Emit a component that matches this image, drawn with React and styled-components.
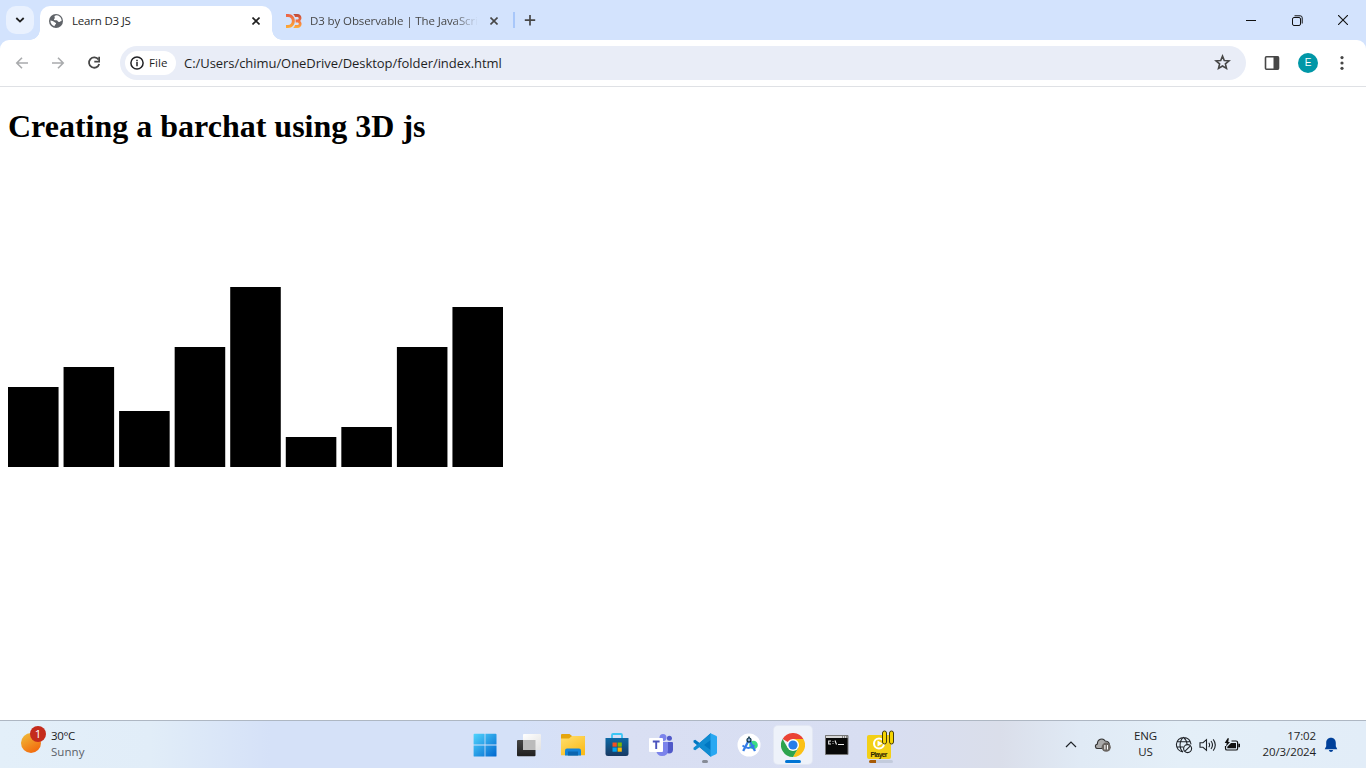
import React from "react";
import styled, { createGlobalStyle } from "styled-components";

const Global = createGlobalStyle`
  *{box-sizing:border-box}
  html,body{margin:0;padding:0;background:#fff;overflow:hidden}
  body{font-family:"Open Sans","Noto Sans",sans-serif;color:#1f1f1f}
  svg{display:block;flex:none}
`;

const Screen = styled.div`
  width:1366px;height:768px;display:flex;flex-direction:column;overflow:hidden;
`;
const TabStrip = styled.div`
  height:40px;flex:none;background:#d3e3fd;display:flex;align-items:flex-start;padding:6px 0 0 6px;
`;
const TabSearch = styled.button`
  width:28px;height:28px;padding:0;border:0;border-radius:10px;background:#e9f1fe;
  display:grid;place-items:center;margin-right:6px;
`;
const Tab = styled.div`
  position:relative;height:34px;width:${p => p.$width}px;display:flex;align-items:center;
  padding:0 9px 5px 8px;border-radius:10px 10px 0 0;font-size:11.5px;
  background:${p => (p.$active ? "#fff" : "transparent")};
  color:${p => (p.$active ? "#1f1f1f" : "#474747")};
  &::before,&::after{
    content:"";display:${p => (p.$active ? "block" : "none")};
    position:absolute;bottom:0;width:10px;height:10px;
  }
  &::before{left:-10px;background:radial-gradient(circle at 0 0,transparent 9.5px,#fff 10px)}
  &::after{right:-10px;background:radial-gradient(circle at 100% 0,transparent 9.5px,#fff 10px)}
`;
const TabTitle = styled.span`
  flex:1;min-width:0;margin:0 8px;overflow:hidden;white-space:nowrap;line-height:18px;
  letter-spacing:${p => p.$spacing || 0}px;
  ${p => p.$fade && "mask-image:linear-gradient(90deg,#000 85%,transparent 100%);"}
`;
const TabDivider = styled.i`
  width:2px;height:16px;background:#a8c7fa;margin:6px 9px 0 2px;
`;
const WindowControls = styled.div`
  margin-left:auto;display:flex;height:28px;align-items:center;
`;
const ControlButton = styled.span`
  width:46px;display:grid;place-items:center;
`;
const Toolbar = styled.div`
  height:47px;flex:none;background:#fff;border-bottom:1px solid #dfe1e5;
  border-radius:9px 9px 0 0;display:flex;align-items:center;padding:0 12px 1px 12px;
`;
const ToolbarBack = styled.div`background:#d3e3fd;flex:none;height:47px;`;
const NavButton = styled.span`
  width:20px;height:20px;display:grid;place-items:center;margin-right:16px;
`;
const Omnibox = styled.div`
  width:1126px;height:34px;border-radius:17px;background:#e9edf7;display:flex;align-items:center;
  padding:0 15px 0 5px;
`;
const FileChip = styled.span`
  width:51px;height:24px;border-radius:12px;background:#fff;display:flex;align-items:center;
  gap:4px;padding-left:4px;font-size:11.5px;font-weight:500;letter-spacing:.1px;
`;
const Url = styled.span`
  margin-left:8px;font-size:13px;letter-spacing:${p => p.$spacing}px;flex:1;white-space:nowrap;line-height:20px;
`;
const Avatar = styled.span`
  width:20px;height:20px;border-radius:50%;background:#0097a7;color:#fff;margin:0 16px;
  display:grid;place-items:center;font:10px "Liberation Sans",sans-serif;
`;
const PanelSlot = styled.span`margin-left:16px;width:20px;display:grid;place-items:center;`;

const Page = styled.main`
  flex:1;min-height:0;padding:21px 8px 0;background:#fff;
  h1{margin:0 0 22px;font:bold 32px/37px "Liberation Serif","Times New Roman",serif;color:#000;white-space:nowrap}
`;

const Taskbar = styled.footer`
  height:48px;flex:none;border-top:1px solid #aeb7c3;display:grid;grid-template-columns:463px 440px 1fr;
  background:linear-gradient(90deg,#e3eff9 0,#e1edf8 150px,#d5e1f8 270px,#d5e1f8 520px,#d9dff3 620px,#d8def2 880px,#dadeea 1000px,#e0eaf5 1080px,#e4eff8 1180px,#e2edf8 100%);
`;
const Weather = styled.div`
  display:flex;padding:4px 0 0 19px;font-size:11.5px;line-height:16px;color:#1b1b1b;
`;
const WeatherText = styled.div`
  display:flex;flex-direction:column;padding:3px 0 0 4px;
  span{letter-spacing:-.35px}
  small{font-size:11.5px;color:#5b6068;letter-spacing:.05px}
`;
const Apps = styled.nav`display:flex;`;
const AppSlot = styled.span`
  width:44px;height:47px;display:flex;justify-content:center;align-items:center;position:relative;
`;
const AppTile = styled.span`
  width:38px;height:38px;border-radius:4px;display:grid;place-items:center;
  background:${p => (p.$active ? "#eef2fa" : "transparent")};
  box-shadow:${p => (p.$active ? "0 0 0 1px #e2e7f3" : "none")};
`;
const Indicator = styled.i`
  position:absolute;bottom:5px;height:3px;border-radius:2px;
  width:${p => p.$width}px;background:${p => p.$color};
`;
const Tray = styled.div`
  display:flex;align-items:center;justify-content:flex-end;padding:0 20px 0 0;font-size:11.5px;line-height:16px;
`;
const TrayIcon = styled.span`display:grid;place-items:center;width:${p => p.$width}px;`;
const Language = styled.div`
  width:53px;text-align:center;letter-spacing:-.1px;padding-bottom:1px;
`;
const Clock = styled.div`
  width:72px;text-align:right;white-space:nowrap;letter-spacing:-.12px;padding:0 0 2px;
`;

const Cross = ({ size = 8, w = 1.6, c = "#1f1f1f" }) => (
  <svg width={size} height={size} viewBox="0 0 8 8"><path d="M.5.5l7 7M7.5.5l-7 7" stroke={c} strokeWidth={w} /></svg>
);
const Globe = () => (
  <svg width="16" height="16" viewBox="0 0 16 16">
    <circle cx="8" cy="8" r="7" fill="#5f6368" />
    <path d="M8.8 2.3c-2.2.1-2.7 1-2.1 2.1.6.8-.7 1.2-.8 2.1 0 .8 1.6.7 2.7.8 1.2.1.8 1.5 2.2 1.7 1.1.1 1.2-.9 2.8-1.1.2-2.8-2.1-5.3-4.8-5.6zM2.4 7.5c1.5.2 3 .7 4 1.6.8.7 1.7.7 1.7 1.5 0 .9-1.5.7-1.5 2.7-2.4-.7-4.3-2.8-4.2-5.8z" fill="#fff" />
  </svg>
);
const D3Logo = () => (
  <svg width="16" height="14" viewBox="0 0 16 14">
    <defs><linearGradient id="d3" x1="0" x2="0" y1="0" y2="1"><stop stopColor="#eb6048" /><stop offset="1" stopColor="#ffad35" /></linearGradient>
      <linearGradient id="d3r" x1="0" x2="0" y1="0" y2="1"><stop stopColor="#bd4838" /><stop offset=".5" stopColor="#f37243" /><stop offset="1" stopColor="#ffad35" /></linearGradient></defs>
    <path d="M0 0h2c9.2 0 9.2 14 0 14H0v-3h2c5.2 0 5.2-8 0-8H0z" fill="url(#d3)" />
    <path d="M7 0h4.2C15.7 0 16.5 5 14.2 7c2.8 2.5 1.2 7-3 7H7c1-.8 1.6-1.7 2-3h2.3c2 0 2-2.6 0-2.6H9.6V5.6h1.7c1.9 0 1.9-2.6 0-2.6H9C8.6 1.6 8 .8 7 0z" fill="url(#d3r)" />
  </svg>
);
const Arrow = ({ flip }) => (
  <svg width="14" height="12" viewBox="0 0 14 12" transform={flip ? "scale(-1 1)" : undefined}>
    <path d="M13 6H2M7 .8L1.8 6 7 11.2" fill="none" stroke="#a9abad" strokeWidth="1.6" />
  </svg>
);
const Reload = () => (
  <svg width="14" height="14" viewBox="0 0 14 14">
    <path d="M11.5 3.6A5.2 5.2 0 1 0 12.2 8" fill="none" stroke="#474747" strokeWidth="1.8" />
    <path d="M13 .8v5.7H7.3v-1.7h4V.8z" fill="#474747" />
  </svg>
);
const Info = () => (
  <svg width="16" height="16" viewBox="0 0 16 16"><circle cx="8" cy="8" r="6.1" fill="none" stroke="#202124" strokeWidth="1.5" /><path d="M8 7v4.3M8 4.7v1.5" stroke="#202124" strokeWidth="1.5" /></svg>
);
const Star = () => (
  <svg width="17" height="17" viewBox="0 0 24 24"><path d="M12 3l2.5 6.1 6.6.5-5 4.3 1.5 6.4L12 16.9l-5.6 3.4 1.5-6.4-5-4.3 6.6-.5z" fill="none" stroke="#474747" strokeWidth="2.3" /></svg>
);
const SidePanel = () => (
  <svg width="16" height="16" viewBox="0 0 16 16"><rect x="1.5" y="1.8" width="13" height="12.4" rx="1" fill="none" stroke="#474747" strokeWidth="1.6" /><path d="M9.5 1.5h5v13h-5z" fill="#474747" /></svg>
);
const Dots = () => (
  <svg width="16" height="16" viewBox="0 0 16 16" fill="#474747"><circle cx="8" cy="2.6" r="1.6" /><circle cx="8" cy="8" r="1.6" /><circle cx="8" cy="13.3" r="1.6" /></svg>
);

const bars = [80, 100, 56, 120, 180, 30, 40, 120, 160];
const BarChart = () => (
  <svg width="500" height="300">
    {bars.map((h, i) => <rect key={i} x={(i * 500) / 9} y={300 - h} width={500 / 9 - 5} height={h} />)}
  </svg>
);

const WeatherIcon = () => (
  <svg width="28" height="32" viewBox="0 0 28 32">
    <defs><linearGradient id="sun" x1=".1" y1="0" x2=".7" y2="1"><stop stopColor="#f0bd3a" /><stop offset="1" stopColor="#f2680c" /></linearGradient></defs>
    <circle cx="12" cy="18" r="10" fill="url(#sun)" />
    <circle cx="19" cy="9" r="8" fill="#c42b1c" />
    <text x="19" y="13" textAnchor="middle" fontFamily="Open Sans, sans-serif" fontSize="11.5" fill="#fff">1</text>
  </svg>
);
const StartIcon = () => (
  <svg width="24" height="24" viewBox="0 0 24 24">
    <defs><linearGradient id="win" x1="0" y1="0" x2="1" y2="1"><stop stopColor="#51d4fd" /><stop offset="1" stopColor="#0067cf" /></linearGradient></defs>
    <path d="M1.5.8h9.8a.3.3 0 0 1 .3.3v10.5H.6V1.4q0-.6.9-.6zM12.4.8h10.2q.9 0 .9.6v10.2H12.4zM.6 12.4h11v11.1H1.5q-.9 0-.9-.6zM12.4 12.4h11.1v10.5q0 .6-.9.6H12.4z" fill="url(#win)" />
  </svg>
);
const TaskView = () => (
  <svg width="24" height="24" viewBox="0 0 24 24">
    <defs><linearGradient id="tvd" x2="0" y2="1"><stop stopColor="#454545" /><stop offset="1" stopColor="#202020" /></linearGradient>
      <linearGradient id="tvl" x2="1" y2="1"><stop stopColor="#fff" /><stop offset="1" stopColor="#e2e2e2" /></linearGradient></defs>
    <rect x="0" y="7" width="18.5" height="16.2" rx="1" fill="url(#tvd)" /><rect x="6" y="1" width="18" height="16" rx="1" fill="url(#tvl)" /><path d="M6 7h12.5v10H6z" fill="#bbb" />
  </svg>
);
const FolderIcon = () => (
  <svg width="24" height="24" viewBox="0 0 24 24">
    <defs><linearGradient id="fol" x2=".7" y2="1"><stop stopColor="#ffdf70" /><stop offset="1" stopColor="#fbbc1b" /></linearGradient></defs>
    <path d="M0 2q0-1 1-1h7.5l2.5 2h12q1 0 1 1v5H0z" fill="#e5a50d" />
    <path d="M0 5.5h8l3-2.5h12q1 0 1 1v18.2H0z" fill="url(#fol)" />
    <path d="M4 22.5v-5q0-2 2-2h12q2 0 2 2v5z" fill="#1583d7" /><path d="M7 18.5h10v4H7z" fill="#0b65ae" />
  </svg>
);
const StoreIcon = () => (
  <svg width="24" height="26" viewBox="0 0 24 26">
    <defs><linearGradient id="sto" x2="0" y2="1"><stop stopColor="#0d69a6" /><stop offset="1" stopColor="#183963" /></linearGradient></defs>
    <path d="M7 6V3q0-1 1-1h8q1 0 1 1v3" fill="none" stroke="#3cc6f4" strokeWidth="1.8" />
    <path d="M.5 6h23v15.5q0 2.5-2.5 2.5H3Q.5 24 .5 21.5z" fill="url(#sto)" />
    <path d="M7.5 10.5h4.3v4.2H7.5z" fill="#f25022" /><path d="M12.6 10.5h4.2v4.2h-4.2z" fill="#7fba00" /><path d="M7.5 15.5h4.3v4.2H7.5z" fill="#00a4ef" /><path d="M12.6 15.5h4.2v4.2h-4.2z" fill="#ffb900" />
  </svg>
);
const TeamsIcon = () => (
  <svg width="24" height="24" viewBox="0 0 24 24">
    <circle cx="20.4" cy="5.3" r="2.5" fill="#5059c9" /><circle cx="14" cy="4.4" r="3.5" fill="#7b83eb" />
    <path d="M16 9h7q1 0 1 1v6.5q0 4-4 4-3 0-4-3z" fill="#5059c9" />
    <path d="M8 9h11v8q0 6-6 6-5 0-6-6z" fill="#7b83eb" />
    <rect x="0" y="5" width="14" height="14" rx="1" fill="#fff" /><path d="M3.8 8.5h6.8M7.2 8.5v7.4" stroke="#4b53bc" strokeWidth="1.9" />
  </svg>
);
const CodeIcon = () => (
  <svg width="24" height="24" viewBox="0 0 24 24">
    <path d="M17.5.3L6.7 10.1 2.2 6.7.5 7.6v1.7L18 23.7l2-5V4z" fill="#0077c2" />
    <path d="M17.5 23.7L6.7 13.9l-4.5 3.4-1.7-.9v-1.7L18 .3v6.5L11 12l7 5.2z" fill="#108bd1" />
    <path d="M17.5.3L23 2.8q1 .4 1 1.4v15.6q0 1-1 1.4l-5.5 2.5z" fill="#29a8f2" />
  </svg>
);
const StudioIcon = () => (
  <svg width="24" height="24" viewBox="0 0 24 24">
    <circle cx="12" cy="12" r="11.5" fill="#fff" /><circle cx="16.5" cy="12" r="4.3" fill="#3ddc84" />
    <path d="M11.8 7.3L6.2 18M12.4 7.3L18 18" stroke="#347de8" strokeWidth="2.3" />
    <path d="M5.5 12.5q6 5 12-.2" fill="none" stroke="#347de8" strokeWidth="1.8" />
    <path d="M12 3.5v2" stroke="#073042" strokeWidth="1.5" /><circle cx="12" cy="7" r="2" fill="#8aabd4" stroke="#073042" strokeWidth="1.2" />
  </svg>
);
const ChromeIcon = () => (
  <svg width="24" height="24" viewBox="0 0 24 24">
    <path d="M12 12L1.6 6A12 12 0 0 1 22.4 6z" fill="#ea4335" />
    <path d="M12 12V6h10.4A12 12 0 0 1 12 24l5.2-9z" fill="#fbc116" />
    <path d="M12 12l5.2 3L12 24A12 12 0 0 1 1.6 6l5.2 9z" fill="#2da44e" />
    <circle cx="12" cy="12" r="6" fill="#fff" /><circle cx="12" cy="12" r="4.6" fill="#287de9" />
  </svg>
);
const TerminalIcon = () => (
  <svg width="24" height="20" viewBox="0 0 24 20">
    <path d="M.5.5h22.5v19H.5z" fill="#080808" stroke="#777" /><path d="M1 1h21.5v2H1z" fill="#d7d7d7" />
    <path d="M17 2h1m1 0h1m1 0h1" stroke="#333" />
    <path d="M6 6H3.7v3H6M8 6.2v.9m0 1.1v.9M10 5.5l1.5 4M13 9.5h6" fill="none" stroke="#eee" strokeWidth="1.1" />
  </svg>
);
const PlayerIcon = () => (
  <svg width="28" height="30" viewBox="0 0 28 30">
    <rect x="0" y="5" width="24" height="24" rx="2" fill="#f3d017" />
    <circle cx="12" cy="13.5" r="5" fill="none" stroke="#fff" strokeWidth="2.1" /><path d="M10.5 10.5l5 3-5 3z" fill="#fff" />
    <text x="12" y="26.5" textAnchor="middle" textLength="17" fontFamily="Liberation Sans, sans-serif" fontWeight="700" fontSize="6.8" fill="#2c2500">Player</text>
    <rect x="15.5" y="1" width="4" height="13" rx="2" fill="#f5d400" stroke="#443c0b" /><rect x="22.5" y="1" width="4" height="13" rx="2" fill="#f5d400" stroke="#443c0b" />
  </svg>
);
const CloudIcon = () => (
  <svg width="18" height="16" viewBox="0 0 18 16">
    <path d="M4.5 11.5C1 12 .3 8 3.4 7 3.2 2.2 8.8.2 11.2 4c3.1 0 4.5 2.2 4 4.2v3.3z" fill="#aaa" stroke="#333" strokeWidth="1.1" />
    <circle cx="12.2" cy="10.2" r="4.6" fill="#6b6662" /><path d="M10.9 8v4.4m2.6-4.4v4.4" stroke="#fff" strokeWidth="1.1" />
  </svg>
);
const NetworkIcon = () => (
  <svg width="18" height="18" viewBox="0 0 18 18" fill="none" stroke="#1e2227" strokeWidth="1.1">
    <path d="M8 16A7.3 7.3 0 1 1 16 8.4M8 16c-4-3.5-4-11 .5-14.6C10.8 3.5 12 5.7 12 8M2 5.8h13M2 11h6.5" />
    <circle cx="12.6" cy="12.6" r="4" /><path d="M9.8 15.4l5.6-5.6" />
  </svg>
);
const SoundIcon = () => (
  <svg width="18" height="16" viewBox="0 0 18 16" fill="none" stroke="#1e2227" strokeWidth="1.1">
    <path d="M1 5.7h3l3.5-3v10.6L4 10.3H1zM9.8 5.7q1.6 2.3 0 4.6M12 4q3 4 0 8M14.2 2.4q4.2 5.6 0 11.2" />
  </svg>
);
const BatteryIcon = () => (
  <svg width="17" height="14" viewBox="0 0 17 14">
    <path d="M7.5 3H12q1.6 0 1.6 1.6v5.8q0 1.6-1.6 1.6H3.1q-1.6 0-1.6-1.6V8" fill="none" stroke="#111" strokeWidth="1.2" />
    <path d="M7 5h5v5.2H3.3V8.8zM14.3 5.7H16v3.5h-1.7zM3.6.2L.7 5h2L2 8.5 6 4H4.2l.7-3.8z" fill="#111" />
  </svg>
);
const BellIcon = () => (
  <svg width="14" height="16" viewBox="0 0 14 16" fill="#00409a"><path d="M7 .8c3 0 4.8 2.2 4.8 5v3.4l1.5 3H.7l1.5-3V5.8C2.2 3 4 .8 7 .8zM4.8 13h4.4Q8.6 15 7 15t-2.2-2z" /></svg>
);

const apps = [
  { icon: StartIcon }, { icon: TaskView }, { icon: FolderIcon }, { icon: StoreIcon }, { icon: TeamsIcon },
  { icon: CodeIcon, mark: [6, "#868b96"] }, { icon: StudioIcon },
  { icon: ChromeIcon, active: true, mark: [16, "#0074d4"] }, { icon: TerminalIcon },
  { icon: PlayerIcon, mark: [24, "linear-gradient(90deg,#a85b06 7px,#c3cbdc 7px)"] },
];

export default function App() {
  return (
    <Screen>
      <Global />
      <TabStrip>
        <TabSearch><svg width="10" height="6" viewBox="0 0 10 6"><path d="M1.3 1L5 4.6 8.7 1" fill="none" stroke="#1f1f1f" strokeWidth="1.8" /></svg></TabSearch>
        <Tab $active $width={232}><Globe /><TabTitle $spacing={-0.2}>Learn D3 JS</TabTitle><span style={{ padding: "0 3px" }}><Cross /></span></Tab>
        <Tab $width={239}><svg width="6" height="1" /><D3Logo /><TabTitle $fade $spacing={-0.1}>D3 by Observable | The JavaScript library</TabTitle><span style={{ padding: "0 4px" }}><Cross c="#474747" /></span></Tab>
        <TabDivider />
        <svg width="12" height="28" viewBox="0 0 12 28"><path d="M6 9v10.4M.8 14.2h10.4" stroke="#474747" strokeWidth="1.7" /></svg>
        <WindowControls>
          <ControlButton><svg width="10" height="10"><path d="M0 5.5h10" stroke="#111" /></svg></ControlButton>
          <ControlButton><svg width="11" height="11" viewBox="0 0 11 11" fill="none" stroke="#111"><rect x=".5" y="2.5" width="8" height="8" rx="1.5" /><path d="M2.5.8h5.7q2 0 2 2v5.7" /></svg></ControlButton>
          <ControlButton><svg width="10" height="10" viewBox="0 0 10 10"><path d="M0 0l10 10M10 0L0 10" stroke="#111" strokeWidth="1.1" /></svg></ControlButton>
        </WindowControls>
      </TabStrip>
      <ToolbarBack>
        <Toolbar>
          <NavButton><Arrow /></NavButton><NavButton><Arrow flip /></NavButton><NavButton><Reload /></NavButton>
          <Omnibox>
            <FileChip><Info />File</FileChip>
            <Url $spacing={-0.05}>C:/Users/chimu/OneDrive/Desktop/folder/index.html</Url>
            <Star />
          </Omnibox>
          <PanelSlot><SidePanel /></PanelSlot><Avatar>E</Avatar><Dots />
        </Toolbar>
      </ToolbarBack>
      <Page><h1>Creating a barchat using 3D js</h1><BarChart /></Page>
      <Taskbar>
        <Weather><WeatherIcon /><WeatherText><span>30°C</span><small>Sunny</small></WeatherText></Weather>
        <Apps>
          {apps.map(({ icon: Icon, active, mark }, i) => (
            <AppSlot key={i}><AppTile $active={active}><Icon /></AppTile>{mark && <Indicator $width={mark[0]} $color={mark[1]} />}</AppSlot>
          ))}
        </Apps>
        <Tray>
          <TrayIcon $width={32}><svg width="12" height="7" viewBox="0 0 12 7"><path d="M1 6l5-5 5 5" fill="none" stroke="#1e2227" strokeWidth="1.2" /></svg></TrayIcon>
          <TrayIcon $width={32}><CloudIcon /></TrayIcon>
          <Language>ENG<br />US</Language>
          <TrayIcon $width={24}><NetworkIcon /></TrayIcon><TrayIcon $width={24}><SoundIcon /></TrayIcon><TrayIcon $width={24}><BatteryIcon /></TrayIcon>
          <Clock>17:02<br />20/3/2024</Clock>
          <TrayIcon $width={30}><BellIcon /></TrayIcon>
        </Tray>
      </Taskbar>
    </Screen>
  );
}
